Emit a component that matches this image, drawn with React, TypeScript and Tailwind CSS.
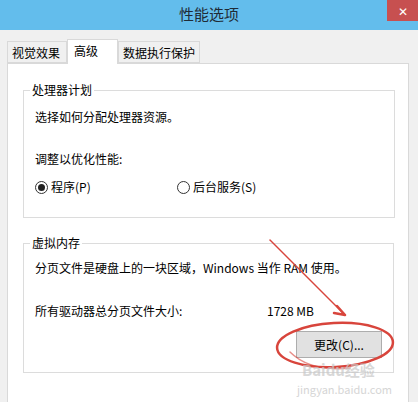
import React from 'react';

const font = { fontFamily: '"Noto Sans CJK SC", "Noto Sans", sans-serif' };

// Radio circle, Windows-style
const Radio: React.FC<{ checked?: boolean; label: string }> = ({ checked, label }) => (
  <label className="flex items-center gap-[3px]">
    <span className="w-[13px] h-[13px] rounded-full border border-[#333] bg-white flex items-center justify-center">
      {checked && <span className="w-[7px] h-[7px] rounded-full bg-[#222]" />}
    </span>
    <span>{label}</span>
  </label>
);

const Tab: React.FC<{ label: string; active?: boolean; w: string }> = ({ label, active, w }) =>
  active ? (
    <div className={`${w} h-[25px] -mb-px bg-white border border-b-0 border-[#d9d9d9] pl-[6px] pt-[1px] leading-[20px] whitespace-nowrap z-10`}>
      {label}
    </div>
  ) : (
    <div className={`${w} h-[22px] bg-[#f0f0f0] border border-[#d9d9d9] pl-[4px] leading-[21px] whitespace-nowrap`}>{label}</div>
  );

export default function App() {
  return (
    <div style={font} className="relative w-[418px] h-[402px] overflow-hidden bg-[#f0f0f0] text-[12px] text-black">
      {/* title bar */}
      <div className="relative h-[30px] bg-[#63bdec] flex items-center justify-center">
        <span className="text-[15px] text-[#1f2b36] -mt-[1px]">性能选项</span>
        <div className="absolute right-0 top-0 w-[31px] h-[21px] bg-[#c75050] flex items-center justify-center text-white text-[12px]">
          ✕
        </div>
      </div>

      {/* tabs */}
      <div className="flex items-end pl-[7px] mt-[9px]">
        <Tab label="视觉效果" w="w-[60px]" />
        <Tab label="高级" active w="w-[51px]" />
        <Tab label="数据执行保护" w="w-[82px]" />
      </div>

      {/* panel */}
      <div className="ml-[7px] w-[402px] h-[400px] bg-white border border-[#d9d9d9] pl-[15px] pt-[18px]">
        <fieldset className="w-[372px] border border-[#dcdcdc] pl-[11px] pb-[22px]">
          <legend className="ml-[-5px] px-[2px] leading-[16px]">处理器计划</legend>
          <div className="mt-[11px] leading-[16px]">选择如何分配处理器资源。</div>
          <div className="mt-[26px] leading-[16px]">调整以优化性能:</div>
          <div className="mt-[12px] flex leading-[16px]">
            <div className="w-[142px]">
              <Radio checked label="程序(P)" />
            </div>
            <Radio label="后台服务(S)" />
          </div>
        </fieldset>

        <fieldset className="mt-[17px] w-[371px] border border-[#dcdcdc] pl-[11px] pr-[11px] pb-[14px]">
          <legend className="ml-[-5px] px-[2px] leading-[16px]">虚拟内存</legend>
          <div className="mt-[9px] leading-[16px]">分页文件是硬盘上的一块区域，Windows 当作 RAM 使用。</div>
          <div className="mt-[27px] flex leading-[16px]">
            <span className="w-[232px]">所有驱动器总分页文件大小:</span>
            <span>1728 MB</span>
          </div>
          <div className="mt-[12px] flex justify-end">
            <button className="w-[86px] h-[27px] bg-[#e1e1e1] border border-[#adadad] text-[12px]">更改(C)...</button>
          </div>
        </fieldset>
      </div>

      {/* red annotation */}
      <svg className="absolute left-0 top-0 pointer-events-none" width="418" height="402">
        <g stroke="#d8453c" fill="none" strokeLinecap="round">
          <line x1="270" y1="240" x2="345" y2="315" strokeWidth="1.5" />
          <path d="M345 315 L337 306 M345 315 L334 313" strokeWidth="2.5" />
          <ellipse cx="335" cy="345" rx="58" ry="22" strokeWidth="2.5" transform="rotate(-3 335 345)" />
          <path d="M290 352 Q310 372 350 368" strokeWidth="1.5" opacity="0.6" />
        </g>
      </svg>

      {/* watermark */}
      <div className="absolute left-[302px] top-[362px] text-[15px] font-bold text-[#c8c8c8] opacity-70 leading-[16px]">Baidu经验</div>
      <div className="absolute left-[297px] top-[381px] text-[11px] text-[#cccccc] opacity-80">jingyan.baidu.com</div>
    </div>
  );
}
